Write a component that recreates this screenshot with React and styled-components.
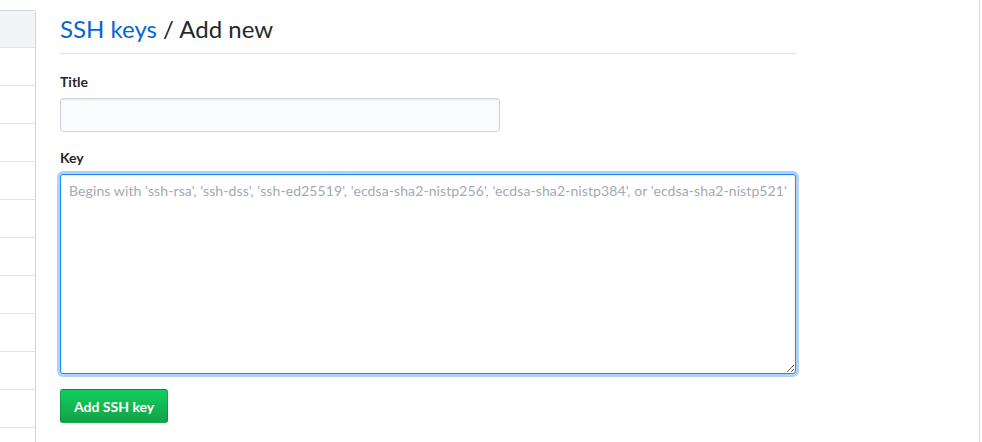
import React from 'react';
import styled, { createGlobalStyle } from 'styled-components';

const Global = createGlobalStyle`
  body {
    margin: 0;
    background: #fff;
    font-family: Lato, "Noto Sans", sans-serif;
    font-size: 14px;
    color: #24292e;
  }
  * { box-sizing: border-box; }
`;

const Page = styled.div`
  display: flex;
  width: 980px;
  height: 442px;
  border-right: 1px solid #dcdcdc;
  padding-top: 10px;
  overflow: hidden;
`;

const Menu = styled.nav`
  width: 36px;
  flex-shrink: 0;
  border: 1px solid #d1d5da;
  border-left: 0;
  border-top-right-radius: 3px;
  display: flex;
  flex-direction: column;
  height: 460px;
`;

const MenuHead = styled.div`
  height: 37px;
  background: #f3f4f6;
  border-bottom: 1px solid #e1e4e8;
`;

const MenuItem = styled.div`
  height: 38px;
  border-bottom: 1px solid #e1e4e8;
  flex-shrink: 0;
`;

const Main = styled.main`
  margin-left: 24px;
  width: 736px;
`;

const Heading = styled.h2`
  margin: 0 0 18px;
  padding: 4px 0 9px;
  font-size: 24px;
  font-weight: 400;
  line-height: 30px;
  border-bottom: 1px solid #e1e4e8;
  color: #24292e;

  a {
    color: #0366d6;
    text-decoration: none;
  }
`;

const Field = styled.div`
  margin-bottom: ${p => p.$gap || '16px'};
`;

const Label = styled.label`
  display: block;
  font-weight: 700;
  font-size: 14px;
  line-height: 20px;
  margin-bottom: 6px;
`;

const Input = styled.input`
  display: block;
  width: 440px;
  height: 34px;
  padding: 6px 8px;
  font: inherit;
  background: #fafbfc;
  border: 1px solid #d1d5da;
  border-radius: 3px;
  box-shadow: inset 0 1px 2px rgba(27, 31, 35, 0.075);
  outline: none;
`;

const TextArea = styled.textarea`
  display: block;
  width: 736px;
  height: 200px;
  padding: 6px 8px;
  font: inherit;
  font-size: 14px;
  line-height: 20px;
  color: #24292e;
  background: #fff;
  border: 1px solid #2188ff;
  border-radius: 3px;
  box-shadow: inset 0 1px 2px rgba(27, 31, 35, 0.075), 0 0 0 3px rgba(3, 102, 214, 0.3);
  outline: none;
  resize: both;

  &::placeholder {
    color: #a3aab1;
    letter-spacing: 0.1px;
  }
`;

const Button = styled.button`
  display: block;
  height: 34px;
  padding: 0 13px;
  font: inherit;
  font-weight: 700;
  font-size: 14px;
  color: #fff;
  background-image: linear-gradient(-180deg, #10cf5e 0%, #13a247 100%);
  border: 1px solid rgba(27, 31, 35, 0.2);
  border-radius: 3px;
  cursor: pointer;
`;

export default function App() {
  return (
    <>
      <Global />
      <Page>
        <Menu>
          <MenuHead />
          {Array.from({ length: 11 }).map((_, i) => (
            <MenuItem key={i} />
          ))}
        </Menu>
        <Main>
          <Heading>
            <a href="#keys">SSH keys</a> / Add new
          </Heading>
          <Field>
            <Label htmlFor="title">Title</Label>
            <Input id="title" type="text" />
          </Field>
          <Field $gap="15px">
            <Label htmlFor="key">Key</Label>
            <TextArea
              id="key"
              autoFocus
              placeholder="Begins with 'ssh-rsa', 'ssh-dss', 'ssh-ed25519', 'ecdsa-sha2-nistp256', 'ecdsa-sha2-nistp384', or 'ecdsa-sha2-nistp521'"
            />
          </Field>
          <Button>Add SSH key</Button>
        </Main>
      </Page>
    </>
  );
}
